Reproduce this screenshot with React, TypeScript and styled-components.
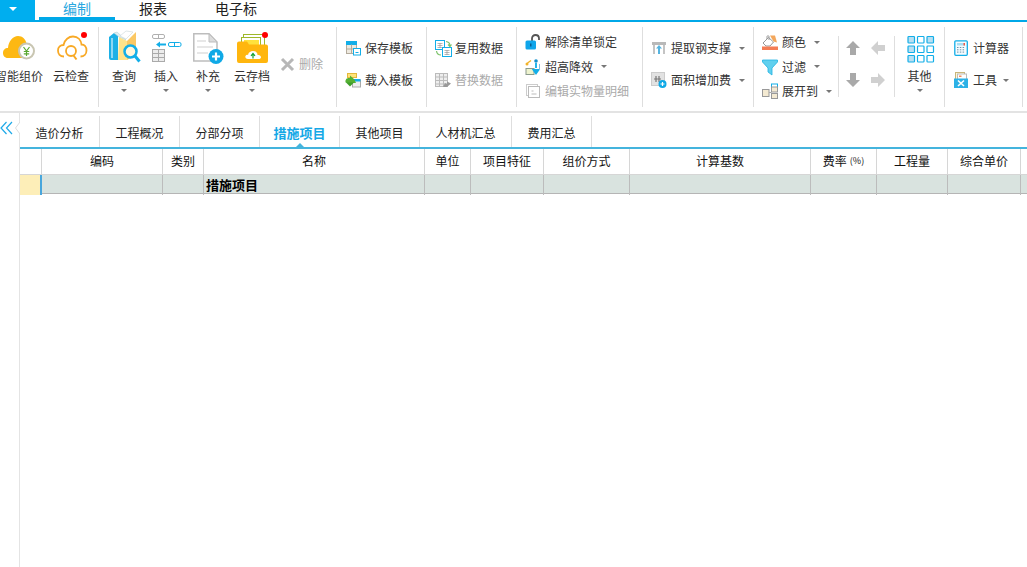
import React from "react";
import styled, { createGlobalStyle } from "styled-components";

const Global = createGlobalStyle`
  html, body { margin: 0; padding: 0; background: #fff; }
  body { font-family: "Noto Sans CJK SC", "Liberation Sans", sans-serif; font-size: 12px; color: #333; }
  * { box-sizing: border-box; }
`;

const BLUE = "#12aee8";

const Page = styled.div`
  width: 1027px; height: 567px; overflow: hidden; display: flex; flex-direction: column; background: #fff;
`;
const TopBar = styled.div`
  height: 22px; flex: none; display: flex; align-items: flex-start; border-bottom: 2px solid #00a8e8;
`;
const MenuButton = styled.div`
  width: 35px; height: 20px; margin-right: 4px; background: #00aeef; display: flex; align-items: center; padding-left: 9px;
  &::after { content: ""; border: 4px solid transparent; border-top: 4px solid #fff; border-bottom: 0; margin-top: -2px; }
`;
const TopTab = styled.div<{ $w: number; $active?: boolean }>`
  width: ${p => p.$w}px; height: 20px; text-align: center; font-size: 14px; line-height: 17px;
  color: ${p => (p.$active ? "#2aa7e0" : "#222")};
  border-bottom: 3px solid ${p => (p.$active ? "#00a8e8" : "transparent")};
`;
const Ribbon = styled.div`
  height: 91px; flex: none; display: flex; align-items: stretch; border-bottom: 2px solid #e3e3e3;
`;
const Rule = styled.div<{ $short?: boolean }>`
  width: 1px; flex: none; background: #dedede; margin: ${p => (p.$short ? "14px 0 14px" : "5px 0 4px")};
`;
const BigGroup = styled.div<{ $w: number; $end?: boolean }>`
  width: ${p => p.$w}px; flex: none; display: flex; align-items: flex-start; overflow: hidden; padding-top: 7px;
  justify-content: ${p => (p.$end ? "flex-end" : "flex-start")};
  padding-left: ${p => (p.$end ? 0 : 4)}px; padding-right: ${p => (p.$end ? 1 : 0)}px;
`;
const ListGroup = styled.div<{ $w?: number; $top: number; $gap: number }>`
  ${p => (p.$w ? `width: ${p.$w}px; flex: none;` : "flex: 1;")}
  display: flex; flex-direction: column; padding: ${p => p.$top}px 0 0 8px; gap: ${p => p.$gap}px;
`;
const BigButton = styled.div<{ $w: number }>`
  width: ${p => p.$w}px; flex: none; display: flex; flex-direction: column; align-items: center;
`;
const BigIcon = styled.svg`
  width: 40px; height: 36px; display: block; flex: none; overflow: visible;
`;
const BigLabel = styled.div`
  margin-top: 3px; height: 16px; line-height: 16px; font-size: 12px; white-space: nowrap; color: #333;
`;
const Caret = styled.span<{ $ml?: number }>`
  display: inline-block; flex: none; width: 0; height: 0; margin-left: ${p => p.$ml ?? 0}px;
  border-left: 3.5px solid transparent; border-right: 3.5px solid transparent; border-top: 3.5px solid #777;
`;
const BigCaret = styled(Caret)`
  margin-top: 5px;
`;
const SmallRow = styled.div<{ $off?: boolean }>`
  height: 18px; display: flex; align-items: center; white-space: nowrap; font-size: 12px; line-height: 18px;
  color: ${p => (p.$off ? "#aaa" : "#333")};
`;
const SmallIcon = styled.svg`
  width: 16px; height: 16px; flex: none; margin-right: 4px; display: block; overflow: visible;
`;
const DeleteRow = styled(SmallRow)`
  margin: 26px 0 0 4px;
`;
const ArrowGroup = styled.div`
  width: 55px; flex: none; display: grid; grid-template-columns: 16px 16px; grid-auto-rows: 16px;
  column-gap: 9px; row-gap: 16px; padding: 18px 0 0 6px; align-content: start;
`;
const ArrowIcon = styled.svg`
  width: 16px; height: 16px; display: block;
`;
const Body = styled.div`
  flex: 1; display: flex; min-height: 0;
`;
const Side = styled.div`
  width: 20px; flex: none; border-right: 1px solid #e4e4e4; position: relative;
`;
const Chevrons = styled.svg`
  position: absolute; left: 0; top: 8px; width: 20px; height: 20px;
`;
const Main = styled.div`
  flex: 1; display: flex; flex-direction: column; min-width: 0;
`;
const TabStrip = styled.div`
  height: 36px; flex: none; padding-top: 3px; display: flex; border-bottom: 2px solid #44b4dd;
`;
const SheetTab = styled.div<{ $w: number; $active?: boolean }>`
  width: ${p => p.$w}px; flex: none; height: 31px; border-right: 1px solid #dedede; position: relative;
  display: flex; align-items: center; justify-content: center; padding-top: 1px;
  font-size: ${p => (p.$active ? 13 : 12)}px;
  font-weight: ${p => (p.$active ? 700 : 400)};
  color: ${p => (p.$active ? "#15a8e6" : "#222")};
  ${p => p.$active ? `&::after { content: ""; position: absolute; left: 50%; margin-left: -4px; bottom: 0;
    border-left: 4px solid transparent; border-right: 4px solid transparent; border-bottom: 4px solid #44b4dd; }` : ""}
`;
const COLS = "22px 121px 41px 221px 46px 73px 86px 181px 66px 71px 73px 1fr";
const HeadRow = styled.div`
  display: grid; grid-template-columns: ${COLS}; height: 26px; flex: none;
`;
const HeadCell = styled.div`
  border-right: 1px solid #d6d6d6; border-bottom: 1px solid #d6d6d6; color: #111; font-size: 12px;
  display: flex; align-items: center; justify-content: center; padding-bottom: 2px;
  &:last-child { border-right: 0; }
`;
const Percent = styled.span`
  font-size: 9px; margin-left: 3px;
`;
const DataRow = styled.div`
  display: grid; grid-template-columns: ${COLS}; height: 19px; flex: none; background: #d9e3df; border-bottom: 1px solid #b5b5b5;
`;
const DataCell = styled.div`
  border-right: 1px solid #bcbcbc; font-size: 13px; line-height: 20px; color: #000; font-weight: 700; padding-left: 2px;
  white-space: nowrap;
  &:last-child { border-right: 0; }
`;
const MarkerCell = styled.div`
  background: #fdeeb8; border-right: 2px solid #48a6dc;
`;

const Cloud = () => (
  <BigIcon viewBox="0 0 40 36">
    <path d="M9 29C5.500 29 4 26.500 4 24C4 21 6 19 9 19C9.500 12 14 7 19 7C23.500 7 27 10.500 27.500 15L27.500 29Z" fill="#fdb813" />
    <circle cx="27.500" cy="22" r="7.500" fill="#fff" stroke="#c9c6b2" strokeWidth="2" />
    <path d="M24.500 18L27.500 22L30.500 18M27.500 22V27M24.800 22.500H30.200M24.800 24.800H30.200" fill="none" stroke="#5aa832" strokeWidth="1.200" />
  </BigIcon>
);
const CloudCheck = () => (
  <BigIcon viewBox="0 0 40 36">
    <path d="M13 27.500C9 27.500 7 25 7 21.500C7 18 9.500 16 12.500 16C13.500 10.500 18 7.500 22 7.500C27 7.500 30 11 30.500 15.500C33.500 15.500 35.500 18 35.500 21.500C35.500 25 33 27.500 29.500 27.500" fill="none" stroke="#f8a925" strokeWidth="1.800" />
    <circle cx="20" cy="22" r="5" fill="none" stroke="#f8a925" strokeWidth="1.800" />
    <path d="M22.500 26.500L25.500 30.500" stroke="#f8a925" strokeWidth="2" />
    <circle cx="33" cy="6" r="3" fill="#f00" />
  </BigIcon>
);
const Books = () => (
  <BigIcon viewBox="0 0 40 36">
    <path d="M5 8L10 4L14 6L14 31L7 31Q5 31 5 29Z" fill="#1cb0e6" />
    <path d="M8 9V29" stroke="#fff" strokeWidth="1" />
    <path d="M10 4L13 3L22 11L15 8Z" fill="#dfeef2" stroke="#a9cbd1" strokeWidth=".5" />
    <path d="M15 8L23 12V31L14 31Z" fill="#ffe38a" />
    <path d="M23 12L32 3V26L23 31Z" fill="#fbc864" />
    <path d="M16 7L22 10L29 3L22 2Z" fill="#fff" stroke="#c9d7d9" strokeWidth=".6" />
    <circle cx="26.500" cy="22.500" r="6" fill="#fff6dc" stroke={BLUE} strokeWidth="2.500" />
    <path d="M31 27L35.500 32.500" stroke={BLUE} strokeWidth="3" />
  </BigIcon>
);
const Insert = () => (
  <BigIcon viewBox="0 0 40 36">
    <rect x="6.500" y="5.500" width="12" height="4" rx="1.500" fill="#fff" stroke="#b0b0b0" />
    <path d="M12.500 5.500V9.500" stroke="#b0b0b0" />
    <path d="M10 15.500L14 12.500V14.500H20V16.500H14V18.500Z" fill={BLUE} />
    <rect x="22.500" y="13.500" width="12.500" height="4" rx="1.500" fill="#fff" stroke={BLUE} />
    <path d="M28.500 13.500V17.500" stroke={BLUE} />
    <rect x="6.500" y="20.500" width="12" height="12" fill="#ececec" stroke="#aaa" />
    <path d="M12.500 20.500V32.500M6.500 24.500H18.500M6.500 28.500H18.500" stroke="#aaa" />
  </BigIcon>
);
const DocAdd = () => (
  <BigIcon viewBox="0 0 40 36">
    <path d="M5.800 4.800H21L29 13V32H5.800Z" fill="#fff" stroke="#bdbdbd" strokeWidth="1.500" />
    <path d="M21 4.800V13H29Z" fill="#dcdcdc" stroke="#bdbdbd" />
    <path d="M9 12H18M9 18H25M9 24H20" stroke="#dfdfdf" strokeWidth="1.500" />
    <circle cx="28" cy="27.500" r="7.500" fill="#0fa9e6" />
    <path d="M28 23.500V31.500M24 27.500H32" stroke="#fff" strokeWidth="2.200" />
  </BigIcon>
);
const Folder = () => (
  <BigIcon viewBox="0 0 40 36">
    <rect x="11.500" y="5.500" width="21" height="14" fill="#fff" stroke="#9eb82a" />
    <rect x="9.500" y="8.500" width="19" height="10" fill="#fff" stroke="#9eb82a" />
    <rect x="12" y="11" width="15" height="6" fill="#ffe13c" />
    <path d="M5 14.500Q5 12.500 7 12.500H15L17 15.500H34Q36 15.500 36 17.500V32Q36 34 34 34H7Q5 34 5 32Z" fill="#ffb60e" />
    <path d="M16 30C13.500 30 13 28 13.500 27C14 26 15 25.500 16 26C16.500 23 19 22 21 22C24 22 25.500 24 25.500 26C27.500 25.500 29 27 29 28C29 29.500 28 30 26.500 30Z" fill="#fff" />
    <path d="M21 29.500V25M19 26.800L21 24.500L23 26.800" fill="none" stroke="#18a030" strokeWidth="1.200" />
    <circle cx="33" cy="6" r="3" fill="#f00" />
  </BigIcon>
);
const Dots = () => {
  const filled = [0, 2, 3, 6];
  const cells = [0, 1, 2, 3, 4, 5, 6, 7, 8];
  return (
    <BigIcon viewBox="0 0 40 36">
      {cells.map(i => (
        <rect key={i} x={8 + (i % 3) * 9.500} y={7.500 + Math.floor(i / 3) * 9.500} width="6.500" height="6.500" rx=".8"
          fill={filled.includes(i) ? "#b9dff1" : "#fff"} stroke={BLUE} strokeWidth="1.200" />
      ))}
    </BigIcon>
  );
};

const SaveT = () => (
  <SmallIcon viewBox="0 0 16 16">
    <rect x="1.500" y="1.500" width="10" height="12" fill="#eee9df" stroke="#b3ab9c" />
    <rect x="1.500" y="1.500" width="10" height="3" fill={BLUE} stroke={BLUE} />
    <path d="M6.500 4.500V13.500M1.500 9H11.500" stroke="#b3ab9c" />
    <rect x="8.500" y="8.500" width="7" height="6.500" fill="#fff" stroke={BLUE} />
    <path d="M10.500 12.500H13.500" stroke={BLUE} />
  </SmallIcon>
);
const LoadT = () => (
  <SmallIcon viewBox="0 0 16 16">
    <rect x="2.500" y="1.500" width="9" height="4" fill="#ffe37a" stroke="#e3b93c" />
    <rect x="7.500" y="8" width="8" height="7" fill="#eee" stroke="#aaa" />
    <rect x="7.500" y="7" width="8" height="2.500" fill={BLUE} />
    <path d="M11 11H2Q0 11 .5 8.500Q1 5.500 4 6H5V3.500L9.500 7.500" fill="#55b033" />
    <path d="M1 10.500L5 14.500L9 10.500H1Z" fill="#3f9e2a" />
  </SmallIcon>
);
const Reuse = () => (
  <SmallIcon viewBox="0 0 16 16">
    <rect x=".5" y=".5" width="9" height="9" fill="#fff" stroke={BLUE} />
    <path d="M2.500 3.500H7.500M2.500 5.500H7.500M2.500 7.500H7.500M5 3V8" stroke="#999" strokeWidth=".7" />
    <rect x="7.500" y="7.500" width="9" height="9" fill="#fff" stroke={BLUE} />
    <path d="M9.500 10.500H14.500M9.500 12.500H14.500M9.500 14.500H14.500M12 10V15" stroke="#999" strokeWidth=".7" />
    <path d="M11 1.500Q15 2 15 6M13 4.500L15 6.500L16.500 4.500M1.500 11Q2 15 6 15" fill="none" stroke="#7cc36a" strokeWidth="1.200" />
  </SmallIcon>
);
const Replace = () => (
  <SmallIcon viewBox="0 0 16 16">
    <rect x=".5" y="1.500" width="12" height="13" fill="#eee" stroke="#bbb" />
    <path d="M.5 5H12.500M.5 8.500H12.500M.5 12H12.500M4.500 1.500V14.500M8.500 1.500V14.500" stroke="#bbb" />
    <path d="M8 15L10 11L12 12V9.500L16 11.500L12 15Z" fill="#999" />
  </SmallIcon>
);
const Unlock = () => (
  <SmallIcon viewBox="0 0 16 16">
    <path d="M7 8V4.500C7 2.500 8.500 1 10.500 1C12.500 1 14 2.500 14 4.500V6" fill="none" stroke="#555" strokeWidth="1.800" />
    <rect x="0.500" y="6.500" width="10.500" height="9" rx="1.500" fill="#0fa5ea" />
    <rect x="5" y="9.500" width="1.500" height="3" fill="#085f92" />
  </SmallIcon>
);
const Lower = () => (
  <SmallIcon viewBox="0 0 16 16">
    <rect x="1" y="9.500" width="8" height="6" fill="#eef3cf" stroke="#8a9a8c" />
    <path d="M2.500 4L6 1.500" stroke="#f2b32a" strokeWidth="1.500" />
    <circle cx="2" cy="5" r="1.500" fill="#f2b32a" />
    <circle cx="11" cy="2" r="1.800" fill="#1290cc" />
    <path d="M11 4V9M11 14.500L8.500 11H13.500Z" stroke="#12aee8" strokeWidth="1.800" fill={BLUE} />
    <path d="M14.500 5V11" stroke="#79bfe5" />
  </SmallIcon>
);
const Detail = () => (
  <SmallIcon viewBox="0 0 16 16">
    <rect x="1.500" y="1.500" width="11" height="11" fill="#fff" stroke="#ccc" />
    <rect x="3.500" y="3.500" width="11" height="11" fill="#fff" stroke="#bbb" />
    <path d="M6.500 8H8.500M6.500 11H11.500" stroke="#bbb" />
  </SmallIcon>
);
const Steel = () => (
  <SmallIcon viewBox="0 0 16 16">
    <path d="M1 2H15V5H1Z" fill="#b9b9b9" />
    <path d="M3 5V14M13 5V14" stroke="#c4c4c4" strokeWidth="2" />
    <path d="M8 5L11 8.500H9V14H7V8.500H5Z" fill="#56b4e0" />
  </SmallIcon>
);
const Area = () => (
  <SmallIcon viewBox="0 0 16 16">
    <rect x=".5" y=".5" width="13" height="13" fill="#e2e2e2" stroke="#ccc" />
    <path d="M3 7H10M5 4V10M8 4V10" stroke="#777" strokeWidth="1.200" />
    <circle cx="11.500" cy="12" r="4" fill="#0fa9e6" />
    <path d="M11.500 10V14M9.500 12H13.500" stroke="#fff" strokeWidth="1.200" />
  </SmallIcon>
);
const Bucket = () => (
  <SmallIcon viewBox="0 0 16 16">
    <path d="M1 9L6.500 3.500L11.500 8L8 12H4Z" fill="#fff" stroke="#999" />
    <path d="M5 5V2.500C5 1.500 7 1.500 7 2.500V6" fill="none" stroke="#999" />
    <path d="M8 1.500L13 1.500L15 8.500L11.500 7.500Z" fill="#f3a75c" />
    <rect x="0" y="12.500" width="16" height="3.500" fill="#f47d55" />
  </SmallIcon>
);
const Funnel = () => (
  <SmallIcon viewBox="0 0 16 16">
    <path d="M.5 1H15.500V3L10 9V16L6 13V9L.5 3Z" fill="#61d0ee" stroke="#22b2e2" strokeWidth=".8" />
  </SmallIcon>
);
const Expand = () => (
  <SmallIcon viewBox="0 0 16 16">
    <rect x="0.500" y="6.500" width="6.500" height="7" fill="#f4ead2" stroke="#999" />
    <rect x="9.500" y="1" width="6" height="5" fill="#fff" stroke={BLUE} />
    <rect x="9.500" y="4" width="6" height="5" fill="#f4ead2" stroke="#999" />
    <rect x="9.500" y="10.500" width="6" height="5" fill="#f4ead2" stroke="#999" />
    <path d="M7 9.500H9.500" stroke="#aaa" />
  </SmallIcon>
);
const Calc = () => (
  <SmallIcon viewBox="0 0 16 16">
    <rect x="1.800" y=".8" width="12.500" height="14.500" rx="1" fill="#f6fbfe" stroke={BLUE} strokeWidth="1.300" />
    <rect x="4" y="3" width="8" height="2.500" fill="#a7def3" />
    <rect x="10.500" y="3" width="1.500" height="2.500" fill="#f05a4a" />
    <path d="M4 7.500H12M4 9.800H12M4 12.100H12" stroke="#6b93ab" strokeDasharray="1.500 1.300" />
  </SmallIcon>
);
const Tool = () => (
  <SmallIcon viewBox="0 0 16 16">
    <rect x="2.500" y=".5" width="9" height="7" fill="#fff7d6" stroke="#c9b57a" />
    <rect x="4.500" y="2" width="9" height="6" fill="#fff" stroke="#bbb" />
    <rect x="6" y="3.500" width="2.500" height="1.500" fill="#f08a5d" />
    <rect x="1" y="6.500" width="14" height="9.500" fill="#2cb1e6" />
    <path d="M5 8.500L11 14M11 8.500L5 14" stroke="#fff" strokeWidth="1.600" />
  </SmallIcon>
);
const Cross = () => (
  <SmallIcon viewBox="0 0 16 16">
    <path d="M3 3L14 14M14 3L3 14" stroke="#b7b7b7" strokeWidth="3" />
  </SmallIcon>
);
const Arrow = ({ turn, fill }: { turn: number; fill: string }) => (
  <ArrowIcon viewBox="0 0 16 16">
    <path d="M8 1L15 8H11V15H5V8H1Z" fill={fill} transform={`rotate(${turn} 8 8)`} />
  </ArrowIcon>
);

const sheetTabs: [string, number][] = [
  ["造价分析", 80], ["工程概况", 80], ["分部分项", 80], ["措施项目", 80], ["其他项目", 80], ["人材机汇总", 92], ["费用汇总", 80],
];
const heads = ["", "编码", "类别", "名称", "单位", "项目特征", "组价方式", "计算基数", "费率", "工程量", "综合单价", ""];

export default function App() {
  return (
    <Page>
      <Global />
      <TopBar>
        <MenuButton />
        <TopTab $w={76} $active>编制</TopTab>
        <TopTab $w={76}>报表</TopTab>
        <TopTab $w={90}>电子标</TopTab>
      </TopBar>
      <Ribbon>
        <BigGroup $w={98} $end>
          <BigButton $w={52}><Cloud /><BigLabel>智能组价</BigLabel></BigButton>
          <BigButton $w={52}><CloudCheck /><BigLabel>云检查</BigLabel></BigButton>
        </BigGroup>
        <Rule />
        <BigGroup $w={237}>
          <BigButton $w={42}><Books /><BigLabel>查询</BigLabel><BigCaret /></BigButton>
          <BigButton $w={42}><Insert /><BigLabel>插入</BigLabel><BigCaret /></BigButton>
          <BigButton $w={42}><DocAdd /><BigLabel>补充</BigLabel><BigCaret /></BigButton>
          <BigButton $w={46}><Folder /><BigLabel>云存档</BigLabel><BigCaret /></BigButton>
          <DeleteRow $off><Cross />删除</DeleteRow>
        </BigGroup>
        <Rule />
        <ListGroup $w={89} $top={17} $gap={14}>
          <SmallRow><SaveT />保存模板</SmallRow>
          <SmallRow><LoadT />载入模板</SmallRow>
        </ListGroup>
        <Rule />
        <ListGroup $w={89} $top={17} $gap={14}>
          <SmallRow><Reuse />复用数据</SmallRow>
          <SmallRow $off><Replace />替换数据</SmallRow>
        </ListGroup>
        <Rule />
        <ListGroup $w={125} $top={11} $gap={6.5}>
          <SmallRow><Unlock />解除清单锁定</SmallRow>
          <SmallRow><Lower />超高降效<Caret $ml={8} /></SmallRow>
          <SmallRow $off><Detail />编辑实物量明细</SmallRow>
        </ListGroup>
        <Rule />
        <ListGroup $w={110} $top={17} $gap={14}>
          <SmallRow><Steel />提取钢支撑<Caret $ml={8} /></SmallRow>
          <SmallRow><Area />面积增加费<Caret $ml={8} /></SmallRow>
        </ListGroup>
        <Rule />
        <ListGroup $w={84} $top={11} $gap={6.5}>
          <SmallRow><Bucket />颜色<Caret $ml={8} /></SmallRow>
          <SmallRow><Funnel />过滤<Caret $ml={8} /></SmallRow>
          <SmallRow><Expand />展开到<Caret $ml={8} /></SmallRow>
        </ListGroup>
        <Rule $short />
        <ArrowGroup>
          <Arrow turn={0} fill="#a9a9a9" />
          <Arrow turn={-90} fill="#d0d0d0" />
          <Arrow turn={180} fill="#a9a9a9" />
          <Arrow turn={90} fill="#d0d0d0" />
        </ArrowGroup>
        <Rule $short />
        <BigGroup $w={49}>
          <BigButton $w={41}><Dots /><BigLabel>其他</BigLabel><BigCaret /></BigButton>
        </BigGroup>
        <Rule />
        <ListGroup $w={77} $top={17} $gap={14}>
          <SmallRow><Calc />计算器</SmallRow>
          <SmallRow><Tool />工具<Caret $ml={6} /></SmallRow>
        </ListGroup>
        <Rule />
      </Ribbon>
      <Body>
        <Side>
          <Chevrons viewBox="0 0 20 20">
            <path d="M6.500 1L1 7L6.500 13M12 1L6.500 7L12 13" fill="none" stroke="#1ea9e8" strokeWidth="1.200" />
            <path d="M20 1L15.500 7L20 13" fill="#fff" stroke="#dcdcdc" />
          </Chevrons>
        </Side>
        <Main>
          <TabStrip>
            {sheetTabs.map(([t, w]) => (
              <SheetTab key={t} $w={w} $active={t === "措施项目"}>{t}</SheetTab>
            ))}
          </TabStrip>
          <HeadRow>
            {heads.map((h, i) => (
              <HeadCell key={i}>{h}{h === "费率" ? <Percent>(%)</Percent> : null}</HeadCell>
            ))}
          </HeadRow>
          <DataRow>
            <MarkerCell />
            {heads.slice(1).map((h, i) => <DataCell key={i}>{h === "名称" ? "措施项目" : ""}</DataCell>)}
          </DataRow>
        </Main>
      </Body>
    </Page>
  );
}
